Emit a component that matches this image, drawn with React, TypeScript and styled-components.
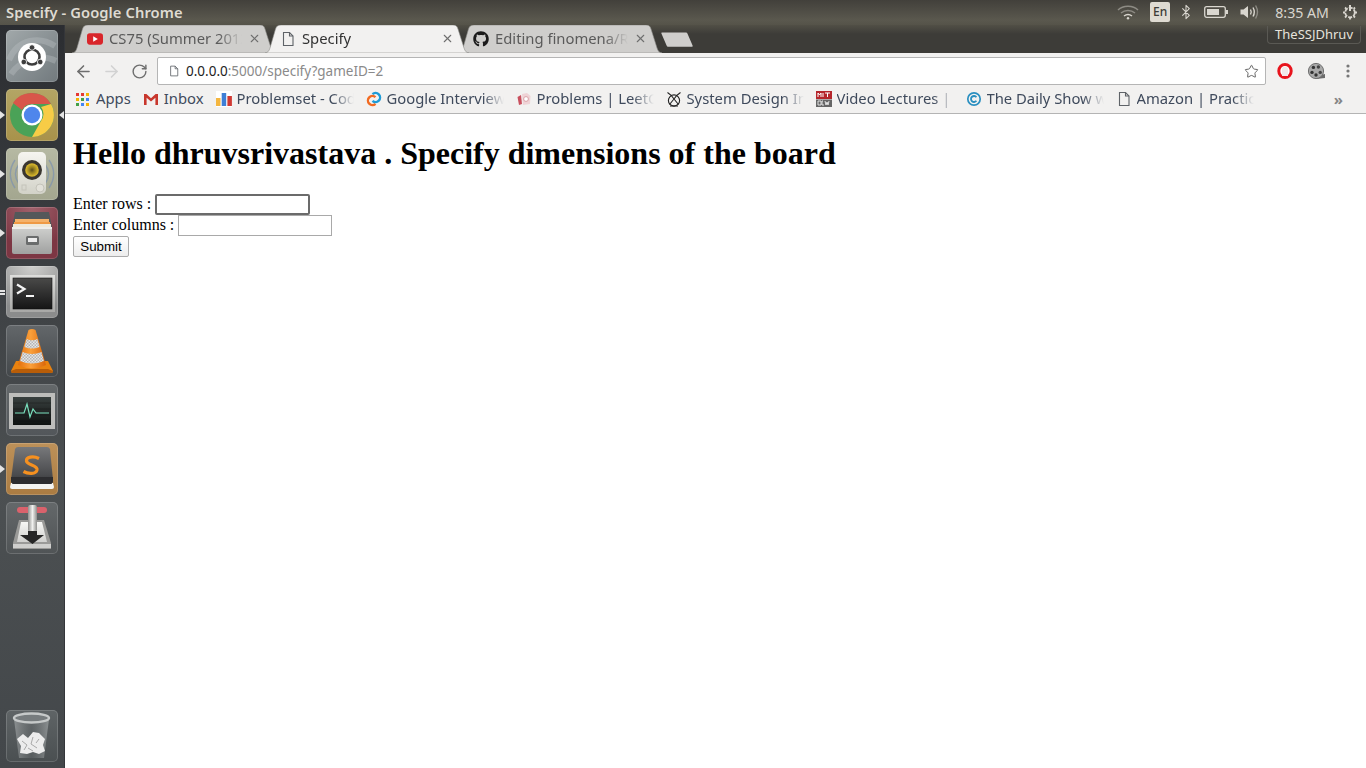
import * as React from 'react';
import styled, { createGlobalStyle } from 'styled-components';
import { FaGithub } from 'react-icons/fa';
import { ArrowLeft, ArrowRight, RotateCw, Star, X, Bluetooth } from 'lucide-react';

const GlobalStyle = createGlobalStyle`
  html, body {
    margin: 0;
    padding: 0;
    height: 768px;
    overflow: hidden;
    background: #fff;
  }
`;

const UI_FONT = `"Noto Sans", "Open Sans", sans-serif`;

/** Window shell */
const Screen = styled.div`
  width: 1366px;
  height: 768px;
  display: flex;
  flex-direction: column;
  overflow: hidden;
`;

const PanelBar = styled.div`
  height: 25px;
  flex: none;
  display: flex;
  align-items: center;
  justify-content: space-between;
  padding: 0 8px 1px 6px;
  box-sizing: border-box;
  background: linear-gradient(#42403b, #5a584e 80%, #555349);
  color: #dfdbd2;
  font: 600 14.7px ${UI_FONT};
`;

const WindowTitle = styled.span`
  letter-spacing: 0.1px;
`;

const Indicators = styled.div`
  display: flex;
  align-items: center;
  color: #d9d6cf;
`;

const Indicator = styled.span<{ $gap: number }>`
  display: flex;
  flex: none;
  margin-right: ${(props) => props.$gap}px;
`;

const LangBadge = styled.span`
  width: 20px;
  height: 20px;
  margin: 0 8px 0 11px;
  border-radius: 2px;
  background: #dfdbd2;
  color: #3c3b37;
  font: 500 12px/20px ${UI_FONT};
  text-align: center;
`;

const Clock = styled.span`
  margin: 0 13px 0 15px;
  font: 400 14.2px ${UI_FONT};
  color: #d9d6cf;
`;

const Body = styled.div`
  flex: 1;
  display: flex;
  min-height: 0;
`;

/** Launcher */
const Launcher = styled.nav`
  width: 65px;
  flex: none;
  display: flex;
  flex-direction: column;
  align-items: center;
  gap: 7px;
  padding: 5px 0 6px;
  box-sizing: border-box;
  background: linear-gradient(#2b2d31 0, #3b3e41 30%, #4c5052 62%, #43474a 100%);
  border-right: 1px solid #34363a;
`;

const Tile = styled.div<{ $bg: string; $last?: boolean }>`
  position: relative;
  width: 52px;
  height: 52px;
  flex: none;
  border-radius: 5px;
  background: ${(props) => props.$bg};
  box-shadow: inset 0 0 0 1px rgba(255, 255, 255, 0.16);
  margin-top: ${(props) => (props.$last ? 'auto' : '0')};

  svg {
    display: block;
  }
`;

const Pip = styled.span<{ $right?: boolean }>`
  position: absolute;
  top: 22px;
  ${(props) => (props.$right ? 'right: -6px;' : 'left: -6px;')}
  width: 0;
  height: 0;
  border-top: 4px solid transparent;
  border-bottom: 4px solid transparent;
  ${(props) => (props.$right ? 'border-right: 5px solid #e4e4e4;' : 'border-left: 5px solid #e4e4e4;')}
`;

const PipBar = styled.span<{ $top: number }>`
  position: absolute;
  left: -6px;
  top: ${(props) => props.$top}px;
  width: 5px;
  height: 2px;
  background: #e4e4e4;
`;

/** Browser */
const Browser = styled.div`
  flex: 1;
  min-width: 0;
  display: flex;
  flex-direction: column;
`;

const TabStrip = styled.div`
  height: 28px;
  flex: none;
  display: flex;
  align-items: flex-end;
  padding-left: 7px;
  background: linear-gradient(#514f46, #3d3c38 9px);
  position: relative;
`;

const TabShape = styled.svg`
  position: absolute;
  left: 0;
  top: 0;
`;

const Tab = styled.div<{ $active?: boolean }>`
  position: relative;
  width: 193px;
  height: 28px;
  flex: none;
  display: flex;
  align-items: center;
  padding: 0 4.5px 1px 15px;
  box-sizing: border-box;
  z-index: ${(props) => (props.$active ? 2 : 1)};
  color: ${(props) => (props.$active ? '#333' : '#5a5a5a')};
  font: 400 14.8px ${UI_FONT};
`;

const TabIcon = styled.span`
  position: relative;
  width: 16px;
  height: 16px;
  flex: none;
  margin-right: 6px;
  display: flex;
`;

const TabTitle = styled.span`
  position: relative;
  top: -1px;
  flex: 1;
  min-width: 0;
  white-space: nowrap;
  overflow: hidden;
  -webkit-mask-image: linear-gradient(to right, #000 82%, transparent 100%);
  mask-image: linear-gradient(to right, #000 82%, transparent 100%);
`;

const TabClose = styled.span`
  position: relative;
  flex: none;
  margin-left: 6px;
  display: flex;
  color: #6e6e6e;
`;

const NewTab = styled.svg`
  margin: 0 0 6px 10px;
  flex: none;
`;

const UserBadge = styled.div`
  position: absolute;
  right: 5px;
  top: 1px;
  height: 17px;
  padding: 0 7px;
  border: 1px solid #5a5954;
  border-top: none;
  border-radius: 0 0 4px 4px;
  color: #e6e3dc;
  font: 400 13px/17px ${UI_FONT};
`;

const Toolbar = styled.div`
  height: 34px;
  flex: none;
  display: flex;
  align-items: center;
  padding: 4px 0 2px 8px;
  box-sizing: border-box;
  background: #f2f1f0;
`;

const NavButton = styled.span<{ $dim?: boolean }>`
  width: 20px;
  height: 20px;
  margin-right: 8px;
  flex: none;
  display: flex;
  align-items: center;
  justify-content: center;
  color: ${(props) => (props.$dim ? '#d2d2d2' : '#6e6e6e')};
`;

const Omnibox = styled.div`
  width: 1109px;
  height: 28px;
  flex: none;
  display: flex;
  align-items: center;
  padding: 0 6px 0 10px;
  box-sizing: border-box;
  background: #fff;
  border: 1px solid #b5b5b5;
  border-radius: 2px;
  font: 400 13.5px ${UI_FONT};
  color: #8a8a8a;
`;

const Host = styled.span`
  color: #222;
`;

const Url = styled.span`
  flex: 1;
  margin-left: 6px;
  white-space: nowrap;
`;

const Extensions = styled.div`
  flex: 1;
  display: flex;
  align-items: center;
  padding-left: 10px;
`;

const ExtensionSlot = styled.span<{ $gap: number }>`
  display: flex;
  flex: none;
  margin-right: ${(props) => props.$gap}px;
`;

const BookmarkBar = styled.div`
  height: 27px;
  flex: none;
  display: flex;
  align-items: center;
  padding: 0 8px 2px 4px;
  box-sizing: border-box;
  background: #f2f1f0;
  border-bottom: 1px solid #b4b4b4;
`;

const Bookmark = styled.div`
  flex: none;
  display: flex;
  align-items: center;
  gap: 5px;
  padding: 0 6px;
  color: #3f4a5c;
  font: 400 14.8px ${UI_FONT};
`;

const BookmarkIcon = styled.span`
  width: 16px;
  height: 16px;
  flex: none;
  display: flex;
`;

const BookmarkText = styled.span<{ $fade?: boolean }>`
  position: relative;
  top: -1px;
  white-space: nowrap;
  overflow: hidden;
  ${(props) =>
    props.$fade
      ? `width: 117px;
  -webkit-mask-image: linear-gradient(to right, #000 82%, transparent 100%);
  mask-image: linear-gradient(to right, #000 82%, transparent 100%);`
      : ''}
`;

const Chevron = styled.span`
  margin-left: auto;
  margin-right: 15px;
  color: #858585;
  font: 700 15px ${UI_FONT};
`;

/** Page content */
const Page = styled.main`
  flex: 1;
  background: #fff;
  color: #000;
  padding: 0 8px;
  font: 16px/normal "Liberation Serif", serif;
`;

const Heading = styled.h1`
  font-size: 32px;
  font-weight: 700;
  margin: 21.44px 0;
`;

const FieldRow = styled.div`
  height: 21px;
  display: flex;
  align-items: flex-start;
  gap: 4px;
  line-height: 20px;
  white-space: nowrap;
`;

const FieldInput = styled.input<{ $focused?: boolean }>`
  width: ${(props) => (props.$focused ? 155 : 154)}px;
  height: 21px;
  flex: none;
  box-sizing: border-box;
  padding: 1px 2px;
  margin: 0;
  background: #fff;
  border: ${(props) => (props.$focused ? '2px solid #6b6b6b' : '1px solid #a9a9a9')};
  border-radius: ${(props) => (props.$focused ? '2px' : '0')};
  outline: none;
`;

const SubmitButton = styled.button`
  width: 56px;
  height: 21px;
  margin: 0;
  padding: 0;
  display: block;
  box-sizing: border-box;
  border: 1px solid #ababab;
  border-radius: 2px;
  background: linear-gradient(#fff, #ededed);
  color: #000;
  font: 13.33px "Liberation Sans", sans-serif;
`;

/** Small drawings */
const FileGlyph: React.FC<{ size?: number; color?: string }> = ({ size = 16, color = '#5f6368' }) => (
  <svg width={size} height={size} viewBox="0 0 16 16" fill="none" stroke={color} strokeWidth="1.1">
    <path d="M3.5 1.5h6l3.5 3.5v9.5h-9.5z" />
    <path d="M9.5 1.5v3.5h3.5" />
  </svg>
);

const TabBackground: React.FC<{ active?: boolean }> = ({ active }) => (
  <TabShape width="204" height="28" viewBox="0 0 204 28">
    <path
      d="M0 28 C3 27.5 4 26 5 23 L10.5 4 C11.5 1 13 0 16 0 L188 0 C191 0 192 1 193 4 L199 23 C200 26 201 27.5 204 28 Z"
      fill={active ? '#f2f1f0' : '#cfcecc'}
      stroke="#8f8e8c"
      strokeWidth="0.6"
    />
  </TabShape>
);

const YouTubeIcon = () => (
  <svg width="17" height="16" viewBox="0 0 17 16">
    <rect x="0" y="2" width="17" height="12" rx="3" fill="#d9252a" />
    <path d="M6.6 5.2 L11.5 8 L6.6 10.8 Z" fill="#fff" />
  </svg>
);

const AppsIcon = () => (
  <svg width="16" height="16" viewBox="0 0 16 16">
    {[
      ['#e53935', '#e53935', '#f4b400'],
      ['#f4b400', '#43a047', '#4285f4'],
      ['#43a047', '#4285f4', '#f4b400'],
    ].map((row, y) =>
      row.map((color, x) => <rect key={`${x}-${y}`} x={1 + x * 5} y={2 + y * 5} width="3" height="3" fill={color} />),
    )}
  </svg>
);

const GmailIcon = () => (
  <svg width="16" height="16" viewBox="0 0 16 16">
    <path d="M1 3h2.4L8 7.2 12.6 3H15v11h-2.6V6.8L8 10.6 3.6 6.8V14H1z" fill="#c8372d" />
  </svg>
);

const ChartIcon = () => (
  <svg width="16" height="16" viewBox="0 0 16 16">
    <rect width="16" height="16" fill="#fff" />
    <rect x="0" y="7" width="4.5" height="8" fill="#f4b63f" />
    <rect x="5.7" y="2" width="4.5" height="13" fill="#3f7fd6" />
    <rect x="11.4" y="5" width="4.5" height="10" fill="#d03a34" />
  </svg>
);

const InterviewIcon = () => (
  <svg width="16" height="16" viewBox="0 0 16 16" fill="none" strokeWidth="2.4">
    <path d="M9.5 6.2 A4.5 4.5 0 1 0 9.5 12.8" stroke="#f26a21" />
    <path d="M6.5 3.2 A4.5 4.5 0 1 1 6.5 9.8" stroke="#1e9bd7" />
  </svg>
);

const LeetIcon = () => (
  <svg width="16" height="16" viewBox="0 0 16 16">
    <path d="M1.5 6 L5 4 L6 13 L3 14 Z" fill="#c9505e" />
    <path d="M6 3 L11 2 L14.5 5 L14 13 L7 14 Z" fill="#efd3d6" />
    <circle cx="10" cy="8" r="2.4" fill="#fff" stroke="#d9a0a6" />
  </svg>
);

const DesignIcon = () => (
  <svg width="16" height="16" viewBox="0 0 16 16" fill="none" stroke="#222" strokeWidth="1.1">
    <circle cx="8" cy="9.5" r="5.6" />
    <path d="M1.5 1.5 C4 3 6 5 8 8 C10 5 12 3 14.5 1.5 M8 8 L3.5 13.5 M8 8 L12.5 13.5 M4 15h8" />
  </svg>
);

const OcwIcon = () => (
  <svg width="16" height="16" viewBox="0 0 16 16">
    <rect width="16" height="8" fill="#b5262c" />
    <rect y="8.5" width="16" height="7.5" fill="#666" />
    <path d="M2 6V2l1.5 2L5 2v4M7 2v4M9 2h5M11.5 2v4" stroke="#fff" strokeWidth="1" fill="none" />
    <path d="M2 10h3v4H2zM7 10H6v4h2M9 10l1 4 1-3 1 3 1-4" stroke="#eee" strokeWidth="0.9" fill="none" />
  </svg>
);

const DailyIcon = () => (
  <svg width="16" height="16" viewBox="0 0 16 16" fill="none" stroke="#2a8fc0">
    <circle cx="8" cy="8" r="6.2" strokeWidth="1.7" />
    <path d="M10.4 6.2 A3 3 0 1 0 10.4 9.8" strokeWidth="1.8" />
  </svg>
);

const OperaIcon = () => (
  <svg width="18" height="18" viewBox="0 0 18 18">
    <ellipse cx="9" cy="9" rx="6.2" ry="6.6" fill="#fff" stroke="#e8141d" strokeWidth="3" />
    <path d="M6 14 V7 Q6 5 7.5 5 H10 Q12 5 12 7 V14 Z" fill="#f1e9e9" />
  </svg>
);

const FilmIcon = () => (
  <svg width="18" height="18" viewBox="0 0 18 18">
    <path d="M8 14 L17 12 L17 16 L8 17 Z" fill="#6b6b6b" />
    <circle cx="8" cy="9" r="7.6" fill="#a9a9a9" />
    <circle cx="8" cy="9" r="7.6" fill="none" stroke="#6f6f6f" />
    <circle cx="5.4" cy="5.4" r="1.7" fill="#333" />
    <circle cx="10.4" cy="5" r="1.7" fill="#444" />
    <circle cx="4" cy="10.4" r="1.7" fill="#333" />
    <circle cx="8" cy="13" r="1.7" fill="#333" />
    <circle cx="12.2" cy="10.4" r="1.7" fill="#444" />
  </svg>
);

const KebabIcon = () => (
  <svg width="4" height="14" viewBox="0 0 4 14" fill="#777">
    <circle cx="2" cy="2" r="1.6" />
    <circle cx="2" cy="7" r="1.6" />
    <circle cx="2" cy="12" r="1.6" />
  </svg>
);

const WifiIcon = () => (
  <svg width="22" height="16" viewBox="0 0 22 16" fill="none" stroke="#8d8b84" strokeWidth="1.5">
    <path d="M1 6 C6 1 16 1 21 6" />
    <path d="M4 9 C8 5.5 14 5.5 18 9" />
    <path d="M7 12 C9.5 10 12.5 10 15 12" stroke="#d9d6cf" />
    <circle cx="11" cy="14.3" r="1.2" fill="#d9d6cf" stroke="none" />
  </svg>
);

const BatteryIcon = () => (
  <svg width="24" height="14" viewBox="0 0 24 14">
    <rect x="0.7" y="1.7" width="20.6" height="10.6" rx="2" fill="none" stroke="#d9d6cf" strokeWidth="1.3" />
    <rect x="3" y="4" width="12" height="6" fill="#d9d6cf" />
    <rect x="22" y="5" width="2" height="4" fill="#d9d6cf" />
  </svg>
);

const VolumeIcon = () => (
  <svg width="20" height="16" viewBox="0 0 20 16" fill="none">
    <path d="M0.5 5.5 H3.5 L8 2 V14 L3.5 10.5 H0.5 Z" fill="#d9d6cf" />
    <path d="M10.5 5.5 Q12 8 10.5 10.5" stroke="#d9d6cf" strokeWidth="1.4" />
    <path d="M13 3.5 Q15.6 8 13 12.5" stroke="#d9d6cf" strokeWidth="1.4" />
    <path d="M15.6 1.5 Q19.4 8 15.6 14.5" stroke="#8d8b84" strokeWidth="1.4" />
  </svg>
);

const GearPowerIcon = () => (
  <svg width="16" height="16" viewBox="0 0 16 16" fill="none" stroke="#d9d6cf">
    <circle cx="8" cy="8.5" r="4.8" strokeWidth="1.8" strokeDasharray="4 1.2" />
    <path d="M8 1v6" strokeWidth="2" />
    <path d="M1 8.5h2M13 8.5h2M3 3.5l1.4 1.4M13 3.5l-1.4 1.4M3 13.5l1.4-1.4M13 13.5l-1.4-1.4M8 14v1.5" strokeWidth="1.8" />
  </svg>
);

/** Launcher drawings */
const UbuntuArt = () => (
  <svg width="52" height="52" viewBox="0 0 52 52">
    <path d="M3 30 C12 8 34 6 49 16 M5 44 C16 28 36 24 50 31" stroke="#bfc6c8" strokeWidth="6" fill="none" opacity="0.35" />
    <circle cx="26" cy="27" r="14" fill="#fff" />
    <circle cx="26" cy="27" r="7.5" fill="none" stroke="#3d3d3d" strokeWidth="2.6" />
    <circle cx="26" cy="17.5" r="2.8" fill="#3d3d3d" stroke="#fff" strokeWidth="0.8" />
    <circle cx="17.8" cy="32" r="2.8" fill="#3d3d3d" stroke="#fff" strokeWidth="0.8" />
    <circle cx="34.2" cy="32" r="2.8" fill="#3d3d3d" stroke="#fff" strokeWidth="0.8" />
  </svg>
);

const ChromeArt = () => (
  <svg width="52" height="52" viewBox="0 0 52 52">
    <circle cx="26" cy="26" r="22" fill="#4aa257" />
    <path d="M26 4 A22 22 0 0 1 45 15 L26 15 A11 11 0 0 0 16 21 L7 14 A22 22 0 0 1 26 4 Z" fill="#d8564a" />
    <path d="M45 15 A22 22 0 0 1 26 48 L35 32 A11 11 0 0 0 35 18 Z" fill="#f7cc46" />
    <circle cx="26" cy="26" r="10.5" fill="#fff" />
    <circle cx="26" cy="26" r="8.2" fill="#4f86ec" />
  </svg>
);

const SpeakerArt = () => (
  <svg width="52" height="52" viewBox="0 0 52 52">
    <defs>
      <linearGradient id="speakerBody" x1="0" y1="0" x2="0" y2="1">
        <stop offset="0" stopColor="#f6f5f0" />
        <stop offset="1" stopColor="#d2d2c8" />
      </linearGradient>
      <radialGradient id="speakerCone">
        <stop offset="0" stopColor="#57491c" />
        <stop offset="0.35" stopColor="#8f7a1e" />
        <stop offset="0.9" stopColor="#d6b52c" />
      </radialGradient>
    </defs>
    <path d="M9 12 C3 21 3 31 9 40 M43 12 C49 21 49 31 43 40 M13 16 C8 23 8 29 13 36 M39 16 C44 23 44 29 39 36" stroke="#7f93ad" strokeWidth="1.4" fill="none" opacity="0.75" />
    <rect x="12" y="4" width="28" height="42" rx="5" fill="url(#speakerBody)" />
    <circle cx="26" cy="22" r="10" fill="#3a3630" />
    <circle cx="26" cy="22" r="6.8" fill="url(#speakerCone)" />
    <circle cx="34" cy="40" r="4" fill="#e2e1d9" stroke="#c4c3ba" />
    <rect x="16" y="37" width="4" height="5" fill="none" stroke="#c4c3ba" />
  </svg>
);

const FilesArt = () => (
  <svg width="52" height="52" viewBox="0 0 52 52">
    <defs>
      <linearGradient id="cabinet" x1="0" y1="0" x2="0" y2="1">
        <stop offset="0" stopColor="#cfd0ce" />
        <stop offset="1" stopColor="#a0a1a0" />
      </linearGradient>
    </defs>
    <path d="M9 5 H43 L46 20 H6 Z" fill="#54585a" />
    <rect x="9" y="12" width="34" height="3" fill="#f5b26a" />
    <rect x="8" y="15" width="36" height="2" fill="#ef9a45" />
    <rect x="7" y="17" width="38" height="3" fill="#efe9da" />
    <path d="M6 20 H46 V45 Q46 47 44 47 H8 Q6 47 6 45 Z" fill="url(#cabinet)" />
    <rect x="6" y="20" width="40" height="2" fill="#eeeeec" />
    <rect x="20" y="29" width="13" height="9" rx="1.5" fill="#6a6c6c" />
    <rect x="22" y="31" width="9" height="4" fill="#ececec" />
  </svg>
);

const TerminalArt = () => (
  <svg width="52" height="52" viewBox="0 0 52 52">
    <defs>
      <linearGradient id="termFrame" x1="0" y1="0" x2="0" y2="1">
        <stop offset="0" stopColor="#dededc" />
        <stop offset="1" stopColor="#a8a8a6" />
      </linearGradient>
      <linearGradient id="termScreen" x1="0" y1="0" x2="0" y2="1">
        <stop offset="0" stopColor="#4a4a49" />
        <stop offset="0.6" stopColor="#2a2a2a" />
        <stop offset="1" stopColor="#151515" />
      </linearGradient>
    </defs>
    <rect x="4" y="9" width="45" height="37" fill="url(#termFrame)" />
    <rect x="7" y="12" width="39" height="31" fill="url(#termScreen)" stroke="#111" strokeWidth="0.6" />
    <path d="M11 18.5 L18.5 23 L11 27.5" stroke="#f4f4f4" strokeWidth="2.2" fill="none" />
    <rect x="20" y="29" width="8" height="2" fill="#f4f4f4" />
  </svg>
);

const VlcArt = () => (
  <svg width="52" height="52" viewBox="0 0 52 52">
    <defs>
      <linearGradient id="coneBody" x1="0" y1="0" x2="1" y2="0">
        <stop offset="0" stopColor="#e46f0c" />
        <stop offset="0.45" stopColor="#fba03a" />
        <stop offset="1" stopColor="#d9650a" />
      </linearGradient>
      <pattern id="coneCheck" width="3" height="3" patternUnits="userSpaceOnUse">
        <rect width="3" height="3" fill="#e6e6e6" />
        <rect width="1.5" height="1.5" fill="#b4b4b4" />
        <rect x="1.5" y="1.5" width="1.5" height="1.5" fill="#b4b4b4" />
      </pattern>
    </defs>
    <path d="M10 36 H42 L47 46 Q47 48 45 48 H7 Q5 48 5 46 Z" fill="#e9820f" />
    <path d="M10 44 H42 L47 46 Q47 48 45 48 H7 Q5 48 5 46 Z" fill="#b85d08" />
    <path d="M22.5 5 Q26 3 29.5 5 L40 40 Q26 47 12 40 Z" fill="url(#coneBody)" />
    <path d="M20.6 14 Q26 16.5 31.4 14 L33.6 22 Q26 25 18.4 22 Z" fill="url(#coneCheck)" />
    <path d="M16.6 27 Q26 31 35.4 27 L38 36 Q26 41 14 36 Z" fill="url(#coneCheck)" />
  </svg>
);

const MonitorArt = () => (
  <svg width="52" height="52" viewBox="0 0 52 52">
    <defs>
      <linearGradient id="monScreen" x1="0" y1="0" x2="0" y2="1">
        <stop offset="0" stopColor="#39403f" />
        <stop offset="1" stopColor="#0e1110" />
      </linearGradient>
    </defs>
    <rect x="3" y="9" width="46" height="36" fill="#bdbdbb" />
    <rect x="7" y="13" width="38" height="28" fill="url(#monScreen)" />
    <path d="M7 19 H45 M7 25 H45 M7 31 H45 M7 37 H45" stroke="#000" strokeWidth="0.5" opacity="0.5" />
    <path d="M9 29 H18 L21 20 L24 33 L27 25 L30 29 H43" stroke="#79e0bd" strokeWidth="1.2" fill="none" />
  </svg>
);

const SublimeArt = () => (
  <svg width="52" height="52" viewBox="0 0 52 52">
    <defs>
      <linearGradient id="keyTop" x1="0" y1="0" x2="0" y2="1">
        <stop offset="0" stopColor="#77787a" />
        <stop offset="0.75" stopColor="#4a4b4e" />
        <stop offset="1" stopColor="#333437" />
      </linearGradient>
    </defs>
    <path d="M5 40 H47 L48 44 Q48 46 46 46 H6 Q4 46 4 44 Z" fill="#f4f4f2" />
    <path d="M9 6 Q10 4 12 4 H41 Q43 4 44 6 L47 37 Q47 41 44 41 H8 Q5 41 5 37 Z" fill="url(#keyTop)" />
    <path d="M5 34 H47 V37 Q47 41 44 41 H8 Q5 41 5 37 Z" fill="#2d2d30" />
    <path d="M33 15.5 C27 12.5 20 14 20.5 18 C21 22.5 32 21.5 31 27 C30 31.5 22 31 17.5 28.5" stroke="#f59020" strokeWidth="3.2" fill="none" />
  </svg>
);

const InstallerArt = () => (
  <svg width="52" height="52" viewBox="0 0 52 52">
    <defs>
      <linearGradient id="leverBar" x1="0" y1="0" x2="1" y2="0">
        <stop offset="0" stopColor="#8e8e8c" />
        <stop offset="0.5" stopColor="#f0f0ee" />
        <stop offset="1" stopColor="#8e8e8c" />
      </linearGradient>
      <linearGradient id="baseTop" x1="0" y1="0" x2="0" y2="1">
        <stop offset="0" stopColor="#f7f7f5" />
        <stop offset="1" stopColor="#d0d0ce" />
      </linearGradient>
    </defs>
    <rect x="11" y="5" width="30" height="6" rx="3" fill="#d9626c" />
    <path d="M13 18 H38 L45 41 V47 H7 V41 Z" fill="#9a9a98" />
    <path d="M15 20 H36 L41 40 H11 Z" fill="url(#baseTop)" />
    <path d="M7 42 H45 V46 H7 Z" fill="#cfcfcd" />
    <rect x="22" y="3" width="9" height="27" rx="2" fill="url(#leverBar)" />
    <path d="M22 29 H31 V33 H38 L26.5 42 L14 33 H22 Z" fill="#262626" />
  </svg>
);

const TrashArt = () => (
  <svg width="52" height="52" viewBox="0 0 52 52">
    <defs>
      <linearGradient id="binGlass" x1="0" y1="0" x2="1" y2="0">
        <stop offset="0" stopColor="#a7abac" stopOpacity="0.65" />
        <stop offset="0.5" stopColor="#6b7072" stopOpacity="0.35" />
        <stop offset="1" stopColor="#a7abac" stopOpacity="0.65" />
      </linearGradient>
    </defs>
    <path d="M8 9 L13 48 H38 L43 9 Z" fill="url(#binGlass)" />
    <ellipse cx="25.5" cy="8" rx="17.5" ry="4.5" fill="#777c7e" stroke="#c6c9c9" strokeWidth="2.4" />
    <path d="M11 29 L17 24 L22 28 L27 22 L33 23 L39 29 L37 35 L39 41 L33 44 L27 42 L21 44 L14 43 L15 36 Z" fill="#ececec" />
    <path d="M16 31 L21 35 L18 40 M27 27 L25 34 L31 38 M33 29 L30 33 M22 38 L27 41" stroke="#a9a9a9" fill="none" />
  </svg>
);

const TileBackground = {
  ubuntu: 'linear-gradient(135deg, #a1a8aa, #727a7e)',
  chrome: 'linear-gradient(#b3a565, #a8924a)',
  speaker: 'linear-gradient(#b6b9a3, #a3a68f)',
  files: 'radial-gradient(circle at 50% 0, #a1626c, #7c3643 70%)',
  terminal: 'radial-gradient(circle at 50% 0, #cfcfcd, #8b8c8c 80%)',
  vlc: 'linear-gradient(#63676a, #43474a)',
  monitor: 'linear-gradient(#64686a, #52565a)',
  sublime: 'linear-gradient(#bd9159, #ab7c42)',
  installer: 'linear-gradient(#64686a, #505456)',
  trash: 'linear-gradient(#5f6466, #4a4f51)',
};

const bookmarks: { label: string; icon: React.ReactNode; fade?: boolean }[] = [
  { label: 'Apps', icon: <AppsIcon /> },
  { label: 'Inbox', icon: <GmailIcon /> },
  { label: 'Problemset - Cod', icon: <ChartIcon />, fade: true },
  { label: 'Google Interview', icon: <InterviewIcon />, fade: true },
  { label: 'Problems | LeetC', icon: <LeetIcon />, fade: true },
  { label: 'System Design In', icon: <DesignIcon />, fade: true },
  { label: 'Video Lectures |', icon: <OcwIcon />, fade: true },
  { label: 'The Daily Show w', icon: <DailyIcon />, fade: true },
  { label: 'Amazon | Practic', icon: <FileGlyph />, fade: true },
];

const App: React.FC = () => (
  <Screen>
    <GlobalStyle />
    <PanelBar>
      <WindowTitle>Specify - Google Chrome</WindowTitle>
      <Indicators>
        <WifiIcon />
        <LangBadge>En</LangBadge>
        <Indicator $gap={10}>
          <Bluetooth size={16} strokeWidth={1.6} />
        </Indicator>
        <Indicator $gap={12}>
          <BatteryIcon />
        </Indicator>
        <VolumeIcon />
        <Clock>8:35 AM</Clock>
        <GearPowerIcon />
      </Indicators>
    </PanelBar>
    <Body>
      <Launcher>
        <Tile $bg={TileBackground.ubuntu}>
          <UbuntuArt />
        </Tile>
        <Tile $bg={TileBackground.chrome}>
          <Pip />
          <Pip $right />
          <ChromeArt />
        </Tile>
        <Tile $bg={TileBackground.speaker}>
          <Pip />
          <SpeakerArt />
        </Tile>
        <Tile $bg={TileBackground.files}>
          <Pip />
          <FilesArt />
        </Tile>
        <Tile $bg={TileBackground.terminal}>
          <PipBar $top={24} />
          <PipBar $top={27} />
          <TerminalArt />
        </Tile>
        <Tile $bg={TileBackground.vlc}>
          <VlcArt />
        </Tile>
        <Tile $bg={TileBackground.monitor}>
          <MonitorArt />
        </Tile>
        <Tile $bg={TileBackground.sublime}>
          <Pip />
          <SublimeArt />
        </Tile>
        <Tile $bg={TileBackground.installer}>
          <InstallerArt />
        </Tile>
        <Tile $bg={TileBackground.trash} $last>
          <TrashArt />
        </Tile>
      </Launcher>
      <Browser>
        <TabStrip>
          <Tab>
            <TabBackground />
            <TabIcon>
              <YouTubeIcon />
            </TabIcon>
            <TabTitle>CS75 (Summer 2012</TabTitle>
            <TabClose>
              <X size={13} strokeWidth={2} />
            </TabClose>
          </Tab>
          <Tab $active>
            <TabBackground active />
            <TabIcon>
              <FileGlyph />
            </TabIcon>
            <TabTitle>Specify</TabTitle>
            <TabClose>
              <X size={13} strokeWidth={2} />
            </TabClose>
          </Tab>
          <Tab>
            <TabBackground />
            <TabIcon>
              <FaGithub size={16} color="#1b1b1b" />
            </TabIcon>
            <TabTitle>Editing finomena/R</TabTitle>
            <TabClose>
              <X size={13} strokeWidth={2} />
            </TabClose>
          </Tab>
          <NewTab width="32" height="15" viewBox="0 0 32 15">
            <path d="M1 0.5 H25 Q26 0.5 26.4 1.5 L31.6 13.5 Q32 14.7 31 14.7 H7 Q6 14.7 5.6 13.5 L0.4 1.5 Q0 0.5 1 0.5 Z" fill="#cfcecc" />
          </NewTab>
          <UserBadge>TheSSJDhruv</UserBadge>
        </TabStrip>
        <Toolbar>
          <NavButton>
            <ArrowLeft size={19} strokeWidth={2} />
          </NavButton>
          <NavButton $dim>
            <ArrowRight size={19} strokeWidth={2} />
          </NavButton>
          <NavButton>
            <RotateCw size={17} strokeWidth={2} />
          </NavButton>
          <Omnibox>
            <FileGlyph size={12} />
            <Url>
              <Host>0.0.0.0</Host>:5000/specify?gameID=2
            </Url>
            <Star size={15} strokeWidth={1.6} color="#666" />
          </Omnibox>
          <Extensions>
            <ExtensionSlot $gap={14}>
              <OperaIcon />
            </ExtensionSlot>
            <ExtensionSlot $gap={20}>
              <FilmIcon />
            </ExtensionSlot>
            <KebabIcon />
          </Extensions>
        </Toolbar>
        <BookmarkBar>
          {bookmarks.map((mark) => (
            <Bookmark key={mark.label}>
              <BookmarkIcon>{mark.icon}</BookmarkIcon>
              <BookmarkText $fade={mark.fade}>{mark.label}</BookmarkText>
            </Bookmark>
          ))}
          <Chevron>»</Chevron>
        </BookmarkBar>
        <Page>
          <Heading>Hello dhruvsrivastava . Specify dimensions of the board</Heading>
          <form onSubmit={(e) => e.preventDefault()}>
            <FieldRow>
              <span>Enter rows :</span>
              <FieldInput $focused />
            </FieldRow>
            <FieldRow>
              <span>Enter columns :</span>
              <FieldInput />
            </FieldRow>
            <SubmitButton type="submit">Submit</SubmitButton>
          </form>
        </Page>
      </Browser>
    </Body>
  </Screen>
);

export default App;
